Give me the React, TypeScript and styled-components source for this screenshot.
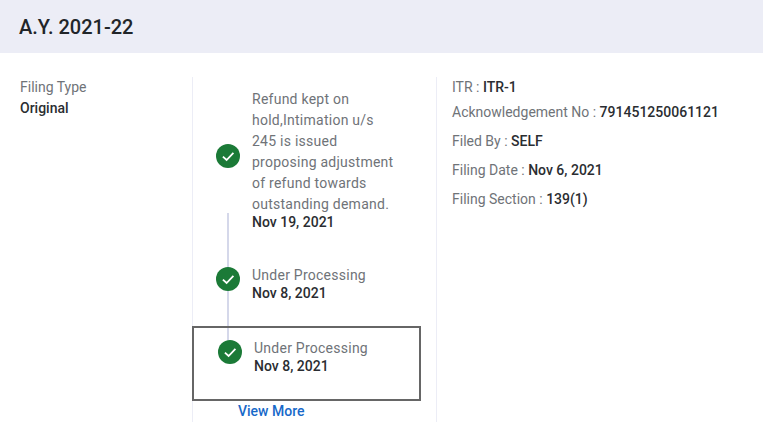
import { FC } from "react";
import styled, { createGlobalStyle } from "styled-components";

const GlobalStyle = createGlobalStyle`
    body {
        margin: 0;
        background: #fff;
        font-family: Roboto, "Liberation Sans", sans-serif;
        font-size: 14px;
    }
`;

type Status = {
    text: string;
    date: string;
    active?: boolean;
};

const statuses: Status[] = [
    {
        text: "Refund kept on hold,Intimation u/s 245 is issued proposing adjustment of refund towards outstanding demand.",
        date: "Nov 19, 2021",
    },
    { text: "Under Processing", date: "Nov 8, 2021" },
    { text: "Under Processing", date: "Nov 8, 2021", active: true },
];

const details = [
    { label: "ITR", value: "ITR-1" },
    { label: "Acknowledgement No", value: "791451250061121" },
    { label: "Filed By", value: "SELF" },
    { label: "Filing Date", value: "Nov 6, 2021" },
    { label: "Filing Section", value: "139(1)" },
];

const CheckIcon: FC = () => (
    <svg width="24" height="24" viewBox="0 0 24 24">
        <circle cx="12" cy="12" r="12" fill="#1b7a37" />
        <path d="M6.9 12.6l3.7 3.4 6.8-7.2" fill="none" stroke="#fff" strokeWidth="1.8" />
    </svg>
);

export default function App() {
    return (
        <>
            <GlobalStyle />
            <Header>
                <Title>A.Y. 2021-22</Title>
            </Header>
            <Body>
                <FilingColumn>
                    <Label>Filing Type</Label>
                    <FilingValue>Original</FilingValue>
                </FilingColumn>
                <TimelineColumn>
                    <Connector />
                    {statuses.map((status, index) => (
                        <Item key={index} $active={status.active}>
                            <IconWrapper>
                                <CheckIcon />
                            </IconWrapper>
                            <ItemText>
                                <StatusText>{status.text}</StatusText>
                                <Strong>{status.date}</Strong>
                            </ItemText>
                        </Item>
                    ))}
                    <ViewMore href="#">View More</ViewMore>
                </TimelineColumn>
                <DetailColumn>
                    {details.map((detail) => (
                        <DetailRow key={detail.label}>
                            {detail.label} : <Strong as="span">{detail.value}</Strong>
                        </DetailRow>
                    ))}
                </DetailColumn>
            </Body>
        </>
    );
}

const Header = styled.header`
    height: 53px;
    background: #ecedf6;
    display: flex;
    align-items: center;
    padding-left: 19px;
`;
const Title = styled.h1`
    margin: 0;
    color: #212529;
    font-size: 20px;
    font-weight: 500;
`;
const Body = styled.main`
    display: flex;
    padding-top: 24px;
`;
const FilingColumn = styled.section`
    width: 172px;
    padding-left: 20px;
    flex: none;
`;
const TimelineColumn = styled.section`
    position: relative;
    width: 245px;
    height: 345px;
    flex: none;
    padding-top: 12px;
    box-sizing: border-box;
    border-left: 1px solid #ecedf6;
    border-right: 1px solid #ecedf6;
`;
const Connector = styled.div`
    position: absolute;
    left: 34px;
    top: 136px;
    width: 2px;
    height: 127px;
    background: #d5d8ea;
`;
const Item = styled.div<{ $active?: boolean }>`
    position: relative;
    display: flex;
    align-items: center;
    box-sizing: border-box;
    margin-left: -1px;
    padding-left: 24px;
    margin-bottom: ${(p) => (p.$active ? "0" : "35px")};
    ${(p) =>
        p.$active &&
        `
        width: 229px;
        height: 75px;
        margin-top: -10px;
        padding-top: 10px;
        padding-bottom: 25px;
        border: 2px solid #666;
    `}
`;
const IconWrapper = styled.div`
    flex: none;
    width: 24px;
    height: 24px;
    margin: 0 12px 8px 0;
    position: relative;
`;
const ItemText = styled.div`
    width: 145px;
`;
const Label = styled.div`
    color: #6f7378;
    line-height: 21px;
    font-size: 14px;
`;
const StatusText = styled(Label)`
    letter-spacing: 0.25px;
`;
const Strong = styled.div`
    color: #2a2d31;
    font-weight: 470;
    font-size: 14px;
    line-height: 15px;
`;
const FilingValue = styled(Strong)`
    margin-top: 3px;
`;
const ViewMore = styled.a`
    display: block;
    margin: 1px 0 0 45px;
    color: #1769c9;
    font-weight: 470;
    font-size: 14px;
    line-height: 18px;
    text-decoration: none;
`;
const DetailColumn = styled.section`
    padding: 1px 0 0 15px;
    display: flex;
    flex-direction: column;
    gap: 11px;
`;
const DetailRow = styled.div`
    color: #6f7378;
    line-height: 18px;

    &:first-child {
        margin-bottom: -4px;
    }
`;
